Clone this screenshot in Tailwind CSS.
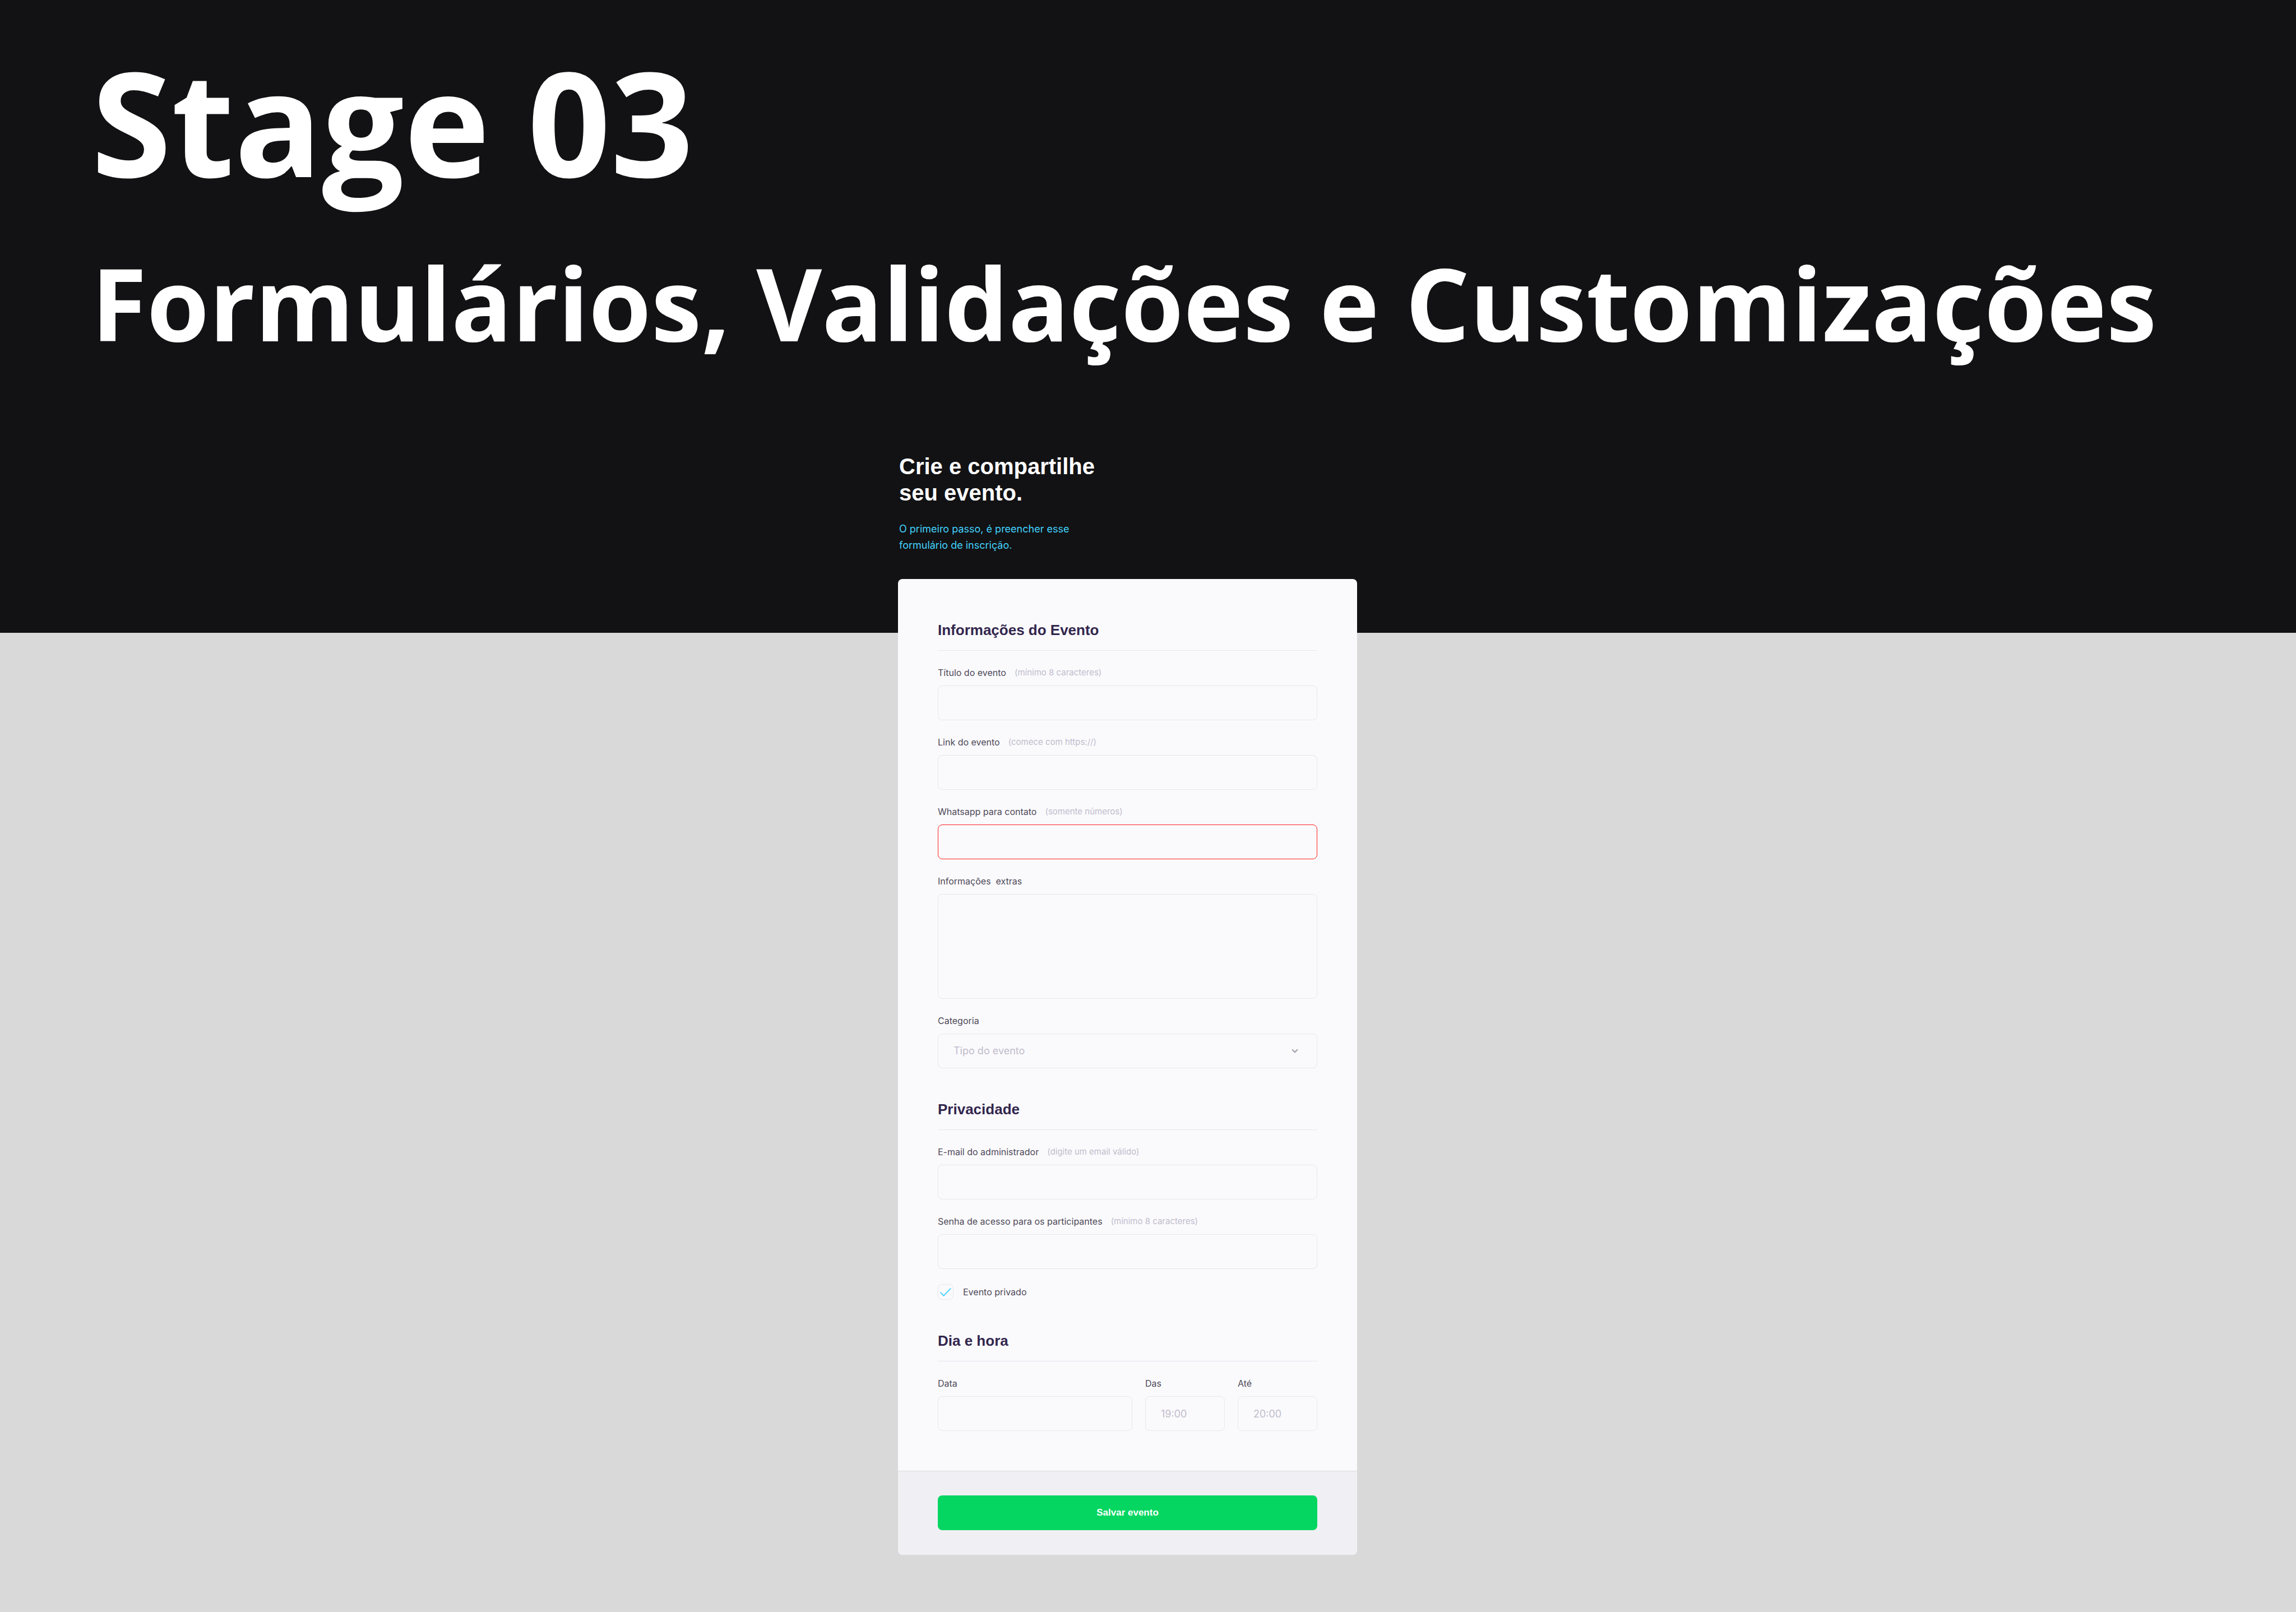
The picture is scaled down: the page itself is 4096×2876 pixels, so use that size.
<!DOCTYPE html>
<html lang="pt-BR">
<head>
<meta charset="utf-8">
<meta name="viewport" content="width=device-width, initial-scale=1">
<title>Stage 03 - Formulários, Validações e Customizações</title>
<script src="https://cdn.jsdelivr.net/npm/@tailwindcss/browser@4"></script>
</head>
<body class="min-h-screen bg-[#d9d9d9] font-['Inter',sans-serif] text-[16px] leading-[24px] text-[#4e4958]">

<header class="bg-[#121214] pt-[86px] pb-[142px] text-white">
  <div class="flex flex-col gap-[105px] px-[163px] font-['Open_Sans',sans-serif] font-bold">
    <h1 class="text-[259px] leading-[259px]">Stage 03</h1>
    <p class="text-[180px] leading-[180px] whitespace-nowrap">Formulários, Validações e Customizações</p>
  </div>
  <div class="mt-[179px] flex justify-center pr-[73px]">
    <div class="flex w-full max-w-[819px] flex-col gap-[26px] px-[2px]">
      <h2 class="font-['Liberation_Sans',sans-serif] text-[40px] leading-[47px] font-bold">Crie e compartilhe<br>seu evento.</h2>
      <p class="text-[18px] leading-[29px] text-[#42d3ff]">O primeiro passo, é preencher esse<br>formulário de inscrição.</p>
    </div>
  </div>
</header>

<main class="relative -mt-24 flex justify-center pr-[73px]">
  <form class="w-full max-w-[819px] overflow-hidden rounded-lg bg-[#fafafc]">
    <div class="flex flex-col gap-[56px] px-[71px] pt-[74px] pb-[71px]">

      <section class="flex flex-col gap-[27px]">
        <h3 class="border-b border-[#e6e6f0] pb-[19px] font-['Liberation_Sans',sans-serif] text-[26px] leading-[34px] font-bold text-[#32264d]">Informações do Evento</h3>
        <div class="flex flex-col gap-[11px]">
          <label for="titulo" class="flex items-center gap-[15px]">Título do evento <span class="text-[15px] text-[#c1bccc]">(mínimo 8 caracteres)</span></label>
          <input id="titulo" type="text" class="h-[62px] w-full rounded-lg border border-[#e6e6f0] px-[27px] text-[18px]">
        </div>
        <div class="flex flex-col gap-[11px]">
          <label for="link" class="flex items-center gap-[15px]">Link do evento <span class="text-[15px] text-[#c1bccc]">(comece com https://)</span></label>
          <input id="link" type="url" class="h-[62px] w-full rounded-lg border border-[#e6e6f0] px-[27px] text-[18px]">
        </div>
        <div class="flex flex-col gap-[11px]">
          <label for="whatsapp" class="flex items-center gap-[15px]">Whatsapp para contato <span class="text-[15px] text-[#c1bccc]">(somente números)</span></label>
          <input id="whatsapp" type="tel" aria-invalid="true" class="h-[62px] w-full rounded-lg border border-[#ff1f1f] px-[27px] text-[18px]">
        </div>
        <div class="flex flex-col gap-[11px]">
          <label for="extras" class="whitespace-pre">Informações  extras</label>
          <textarea id="extras" class="block h-[187px] w-full resize-none rounded-lg border border-[#e6e6f0] px-[27px] py-4 text-[18px]"></textarea>
        </div>
        <div class="flex flex-col gap-[11px]">
          <label for="categoria">Categoria</label>
          <div class="relative">
            <select id="categoria" class="block h-[62px] w-full appearance-none rounded-lg border border-[#e6e6f0] px-[27px] text-[18px] text-[#c1bccc]">
              <option>Tipo do evento</option>
            </select>
            <svg class="pointer-events-none absolute inset-y-0 right-[34px] my-auto h-3 w-3" viewBox="0 0 12 12" fill="none" stroke="#9c98a6" stroke-width="2" stroke-linecap="round" stroke-linejoin="round" aria-hidden="true"><path d="M1.6 3.9 6 8.3l4.4-4.4"/></svg>
          </div>
        </div>
      </section>

      <section class="flex flex-col gap-[27px]">
        <h3 class="border-b border-[#e6e6f0] pb-[19px] font-['Liberation_Sans',sans-serif] text-[26px] leading-[34px] font-bold text-[#32264d]">Privacidade</h3>
        <div class="flex flex-col gap-[11px]">
          <label for="email" class="flex items-center gap-[15px]">E-mail do administrador <span class="text-[15px] text-[#c1bccc]">(digite um email válido)</span></label>
          <input id="email" type="email" class="h-[62px] w-full rounded-lg border border-[#e6e6f0] px-[27px] text-[18px]">
        </div>
        <div class="flex flex-col gap-[11px]">
          <label for="senha" class="flex items-center gap-[15px]">Senha de acesso para os participantes <span class="text-[15px] text-[#c1bccc]">(mínimo 8 caracteres)</span></label>
          <input id="senha" type="password" class="h-[62px] w-full rounded-lg border border-[#e6e6f0] px-[27px] text-[18px]">
        </div>
        <label for="privado" class="flex items-center gap-[17px]">
          <span class="relative h-7 w-7">
            <input id="privado" type="checkbox" checked class="peer block h-7 w-7 appearance-none rounded-lg border border-[#e6e6f0]">
            <svg class="pointer-events-none absolute inset-0 hidden h-7 w-7 peer-checked:block" viewBox="0 0 28 28" fill="none" stroke="#42d3ff" stroke-width="2" aria-hidden="true"><path d="M4.6 14.6l6 6L23.2 7.6"/></svg>
          </span>
          Evento privado
        </label>
      </section>

      <section class="flex flex-col gap-[27px]">
        <h3 class="border-b border-[#e6e6f0] pb-[19px] font-['Liberation_Sans',sans-serif] text-[26px] leading-[34px] font-bold text-[#32264d]">Dia e hora</h3>
        <div class="grid grid-cols-[1fr_142px_142px] gap-[23px]">
          <div class="flex flex-col gap-[11px]">
            <label for="data">Data</label>
            <input id="data" type="text" class="h-[62px] w-full rounded-lg border border-[#e6e6f0] px-[27px] text-[18px]">
          </div>
          <div class="flex flex-col gap-[11px]">
            <label for="das">Das</label>
            <input id="das" type="text" placeholder="19:00" class="h-[62px] w-full rounded-lg border border-[#e6e6f0] px-[27px] text-[18px] placeholder:text-[#c1bccc]">
          </div>
          <div class="flex flex-col gap-[11px]">
            <label for="ate">Até</label>
            <input id="ate" type="text" placeholder="20:00" class="h-[62px] w-full rounded-lg border border-[#e6e6f0] px-[27px] text-[18px] placeholder:text-[#c1bccc]">
          </div>
        </div>
      </section>
    </div>

    <footer class="border-t border-[#d9d9dc] bg-[#f0eff4] px-[71px] pt-[43px] pb-[44px]">
      <button type="submit" class="block h-[62px] w-full rounded-lg bg-[#05d661] font-['Liberation_Sans',sans-serif] text-[17px] font-bold text-white">Salvar evento</button>
    </footer>
  </form>
</main>

</body>
</html>
